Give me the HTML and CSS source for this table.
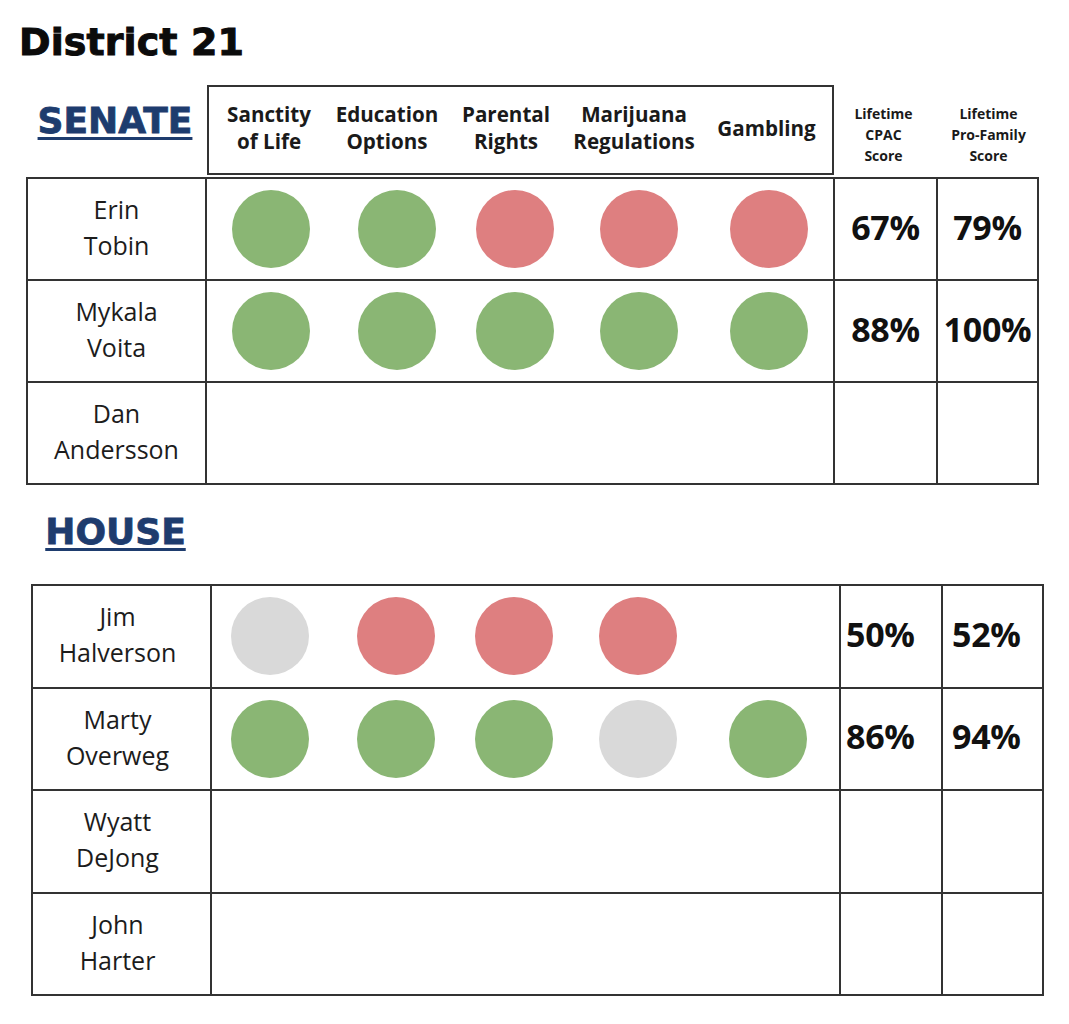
FILE: index.html
```html
<!DOCTYPE html>
<html lang="en">
<head>
<meta charset="utf-8">
<title>District 21</title>
<link rel="stylesheet" href="styles.css">
</head>
<body>
<main class="page">
  <h1 class="title">District 21</h1>

  <section class="senate">
    <div class="senate-head">
      <h2 class="chamber chamber-senate">SENATE</h2>
      <div class="issue-head">
        <span>Sanctity<br>of Life</span>
        <span>Education<br>Options</span>
        <span>Parental<br>Rights</span>
        <span>Marijuana<br>Regulations</span>
        <span>Gambling</span>
      </div>
      <div class="score-head score-head-cpac">Lifetime<br>CPAC<br>Score</div>
      <div class="score-head score-head-family">Lifetime<br>Pro-Family<br>Score</div>
    </div>

    <div class="grid grid-senate">
      <div class="cell name">Erin<br>Tobin</div>
      <div class="cell issues"><span class="dot g"></span><span class="dot g"></span><span class="dot r"></span><span class="dot r"></span><span class="dot r"></span></div>
      <div class="cell pct">67%</div>
      <div class="cell pct">79%</div>

      <div class="cell name">Mykala<br>Voita</div>
      <div class="cell issues"><span class="dot g"></span><span class="dot g"></span><span class="dot g"></span><span class="dot g"></span><span class="dot g"></span></div>
      <div class="cell pct">88%</div>
      <div class="cell pct">100%</div>

      <div class="cell name">Dan<br>Andersson</div>
      <div class="cell issues"></div>
      <div class="cell pct"></div>
      <div class="cell pct"></div>
    </div>
  </section>

  <section class="house">
    <h2 class="chamber chamber-house">HOUSE</h2>
    <div class="grid grid-house">
      <div class="cell name">Jim<br>Halverson</div>
      <div class="cell issues"><span class="dot n"></span><span class="dot r"></span><span class="dot r"></span><span class="dot r"></span><span class="dot empty"></span></div>
      <div class="cell pct pct-left">50%</div>
      <div class="cell pct pct-left pct-family">52%</div>

      <div class="cell name">Marty<br>Overweg</div>
      <div class="cell issues"><span class="dot g"></span><span class="dot g"></span><span class="dot g"></span><span class="dot n"></span><span class="dot g"></span></div>
      <div class="cell pct pct-left">86%</div>
      <div class="cell pct pct-left pct-family">94%</div>

      <div class="cell name">Wyatt<br>DeJong</div>
      <div class="cell issues"></div>
      <div class="cell pct"></div>
      <div class="cell pct"></div>

      <div class="cell name">John<br>Harter</div>
      <div class="cell issues"></div>
      <div class="cell pct"></div>
      <div class="cell pct"></div>
    </div>
  </section>
</main>
</body>
</html>
```

FILE: styles.css
```css
* { box-sizing: border-box; }

html, body {
  margin: 0;
  padding: 0;
  background: #ffffff;
}

body {
  font-family: "Open Sans", "Liberation Sans", sans-serif;
  color: #1c1c1c;
  width: 1069px;
}

.page {
  padding-top: 20px;
}

.title {
  margin: 0 0 21px 19px;
  font-family: "DejaVu Sans", sans-serif;
  font-weight: 700;
  font-size: 38px;
  line-height: 44px;
  color: #0b0b0b;
  -webkit-text-stroke: 1px #0b0b0b;
  letter-spacing: 0.1px;
}

.chamber {
  margin: 0;
  font-family: "DejaVu Sans", sans-serif;
  font-weight: 700;
  font-size: 36px;
  line-height: 42px;
  color: #1e3c6e;
  -webkit-text-stroke: 0.8px #1e3c6e;
  text-decoration: underline;
  text-decoration-thickness: 3px;
  text-underline-offset: 4px;
  text-align: center;
}

/* ---------- Senate header ---------- */
.senate-head {
  display: grid;
  grid-template-columns: 180px 627px 103px 101px;
  height: 90px;
  margin-left: 27px;
  margin-bottom: 2px;
}

.chamber-senate {
  align-self: start;
  padding-top: 15px;
  width: 176px;
}

.issue-head {
  display: grid;
  grid-template-columns: 120px 116px 122px 134px 131px;
  align-items: center;
  padding-bottom: 4px;
  border: 2px solid #333333;
  font-weight: 700;
  font-size: 20.6px;
  line-height: 27px;
  color: #1a1a1a;
  text-align: center;
}

.issue-head span {
  display: block;
}

.score-head {
  padding-top: 18px;
  font-weight: 700;
  font-size: 14px;
  line-height: 21px;
  color: #1a1a1a;
  text-align: center;
}

.score-head-cpac {
  padding-right: 4px;
}

.score-head-family {
  padding-left: 2px;
}

/* ---------- Grids ---------- */
.grid {
  display: grid;
  border-top: 2px solid #333333;
  border-left: 2px solid #333333;
}

.grid-senate {
  grid-template-columns: 179px 628px 103px 101px;
  grid-auto-rows: 102px;
  width: 1013px;
  margin-left: 26px;
}

.grid-house {
  grid-template-columns: 179px 629px 102px 101px;
  grid-auto-rows: 102.5px;
  width: 1013px;
  margin-left: 31px;
}

.cell {
  border-right: 2px solid #333333;
  border-bottom: 2px solid #333333;
  display: flex;
  align-items: center;
  justify-content: center;
}

.name {
  padding-bottom: 4px;
  font-size: 25px;
  line-height: 36px;
  text-align: center;
  color: #1c1c1c;
}

.grid-house .name {
  padding-right: 8px;
}

.issues {
  display: grid;
  grid-template-columns: 128px 124px 112px 136px 124px;
  justify-items: center;
  align-items: center;
  justify-content: start;
}

.grid-house .issues {
  margin-left: -6px;
}

.grid-house .cell.issues {
  border-right: 2px solid #333333;
}

.dot {
  width: 78px;
  height: 78px;
  border-radius: 50%;
  display: block;
}

.dot.g { background: #8ab674; }
.dot.r { background: #de7f80; }
.dot.n { background: #d9d9d9; }
.dot.empty { background: transparent; }

.pct {
  padding-bottom: 5px;
  font-weight: 700;
  font-size: 34px;
  line-height: 40px;
  color: #111111;
  letter-spacing: -0.3px;
}

.pct-left {
  justify-content: flex-start;
  padding-left: 5px;
}

.pct-family {
  padding-left: 9px;
}

/* ---------- House ---------- */
.house {
  margin-top: 26px;
}

.chamber-house {
  width: 175px;
  margin-left: 28px;
  margin-bottom: 31px;
}
```
